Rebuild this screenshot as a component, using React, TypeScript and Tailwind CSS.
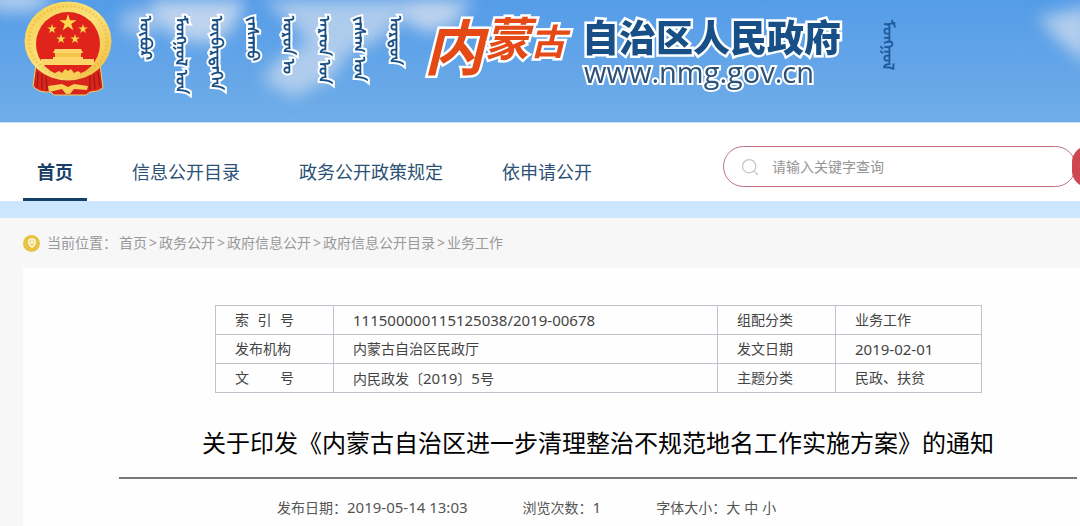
import { MapPin, Search } from 'lucide-react'

const mongolianTitle = [
  'ᠥᠪᠥᠷ',
  'ᠮᠣᠩᠭᠣᠯ ᠤᠨ',
  'ᠥᠪᠡᠷᠲᠡᠭᠡᠨ',
  'ᠵᠠᠰᠠᠬᠤ',
  'ᠣᠷᠣᠨ ᠤ',
  'ᠠᠷᠠᠳ ᠤᠨ',
  'ᠵᠠᠰᠠᠭ ᠤᠨ',
  'ᠣᠷᠳᠣᠨ',
]

const navItems = ['首页', '信息公开目录', '政务公开政策规定', '依申请公开']

const crumbs = ['首页', '政务公开', '政府信息公开', '政府信息公开目录', '业务工作']

const Star = ({ x, y, r }: { x: number; y: number; r: number }) => {
  const points = Array.from({ length: 10 }, (_, i) => {
    const radius = i % 2 === 0 ? r : r * 0.38
    const angle = (Math.PI / 5) * i - Math.PI / 2
    return `${x + radius * Math.cos(angle)},${y + radius * Math.sin(angle)}`
  }).join(' ')
  return <polygon points={points} fill="#fbd84e" />
}

const Emblem = () => (
  <svg viewBox="0 0 90 96" className="w-[90px] h-24 shrink-0" aria-label="国徽" role="img">
    <defs>
      <linearGradient id="gold" x1="0" y1="0" x2="1" y2="1">
        <stop offset="0" stopColor="#f6cf4f" />
        <stop offset="0.5" stopColor="#fbe27c" />
        <stop offset="1" stopColor="#efb93a" />
      </linearGradient>
    </defs>
    <path d="M12 64 L9 86 Q14 93 27 92 L30 95 H62 L66 92 Q74 92 79 88 L76 64 Z" fill="#d9261c" stroke="#f5d05a" strokeWidth="1" />
    <path d="M14 72 L13 88 M18 74 L18 90 M22 76 L23 91 M66 76 L66 90 M70 74 L71 89 M74 72 L76 87" stroke="#9f1712" strokeWidth="1.2" />
    <ellipse cx="44" cy="41" rx="43.5" ry="39.5" fill="url(#gold)" />
    <ellipse cx="44" cy="41" rx="39" ry="35" fill="none" stroke="#e3a52c" strokeWidth="3" strokeDasharray="2 2" opacity="0.35" />
    <circle cx="44" cy="44" r="32" fill="#e0241b" />
    <Star x={44} y={23} r={9} />
    <Star x={28} y={29} r={5} />
    <Star x={59} y={29} r={5} />
    <Star x={37} y={39} r={5} />
    <Star x={51} y={39} r={5} />
    <path d="M31 49 H57 L59 53 H29 Z" fill="#fbd568" />
    <rect x="31" y="53" width="26" height="4" fill="#f4c64c" />
    <path d="M29 57 H59 V59 H70 V65 H17 V59 H29 Z" fill="#fbd568" />
    <path d="M31 73 L35 71 L38 73 L41 69 L44 71 L47 69 L50 73 L54 71 L57 73 L53 77 H35 Z" fill="#f7cf56" />
    <path d="M24 86 L38 84 L44 87 L50 84 L64 86 L63 90 L50 89 L46 94 H42 L38 89 L25 92 Z" fill="#f7cf56" />
  </svg>
)

const Sky = () => (
  <svg viewBox="0 0 1080 123" preserveAspectRatio="none" className="absolute inset-0 w-full h-full" aria-hidden="true">
    <defs>
      <linearGradient id="sky" x1="0" y1="0" x2="0" y2="1">
        <stop offset="0" stopColor="#559ce8" />
        <stop offset="1" stopColor="#70ade8" />
      </linearGradient>
      <filter id="cloud" x="-50%" y="-50%" width="200%" height="200%">
        <feGaussianBlur stdDeviation="8" />
      </filter>
    </defs>
    <rect width="1080" height="123" fill="url(#sky)" />
    <g filter="url(#cloud)" fill="#c9d9ee">
      <ellipse cx="16" cy="0" rx="34" ry="12" opacity="0.8" />
      <ellipse cx="140" cy="22" rx="20" ry="14" opacity="0.6" />
      <path d="M150 0 H246 L232 30 L212 44 L180 40 L160 24 Z" opacity="0.9" />
      <path d="M262 0 H475 L452 24 L428 34 L402 18 L380 40 L350 52 L330 80 L292 98 L262 80 L280 58 L308 44 L290 22 Z" opacity="0.75" />
      <ellipse cx="432" cy="14" rx="30" ry="16" opacity="0.6" />
      <path d="M1038 18 L1090 6 V66 L1060 42 Z" opacity="0.8" />
    </g>
  </svg>
)

const Banner = () => (
  <header className="relative h-[123px] overflow-hidden border-b border-[#c9e2f7]">
    <Sky />
    <div className="relative flex items-start pl-6">
      <Emblem />
      <div lang="mn" className="flex w-[274px] shrink-0 justify-between ml-5 pt-4 text-base leading-6 font-bold text-[#174f86]">
        {mongolianTitle.map((word) => (
          <span key={word} className="whitespace-nowrap [writing-mode:vertical-lr] [paint-order:stroke_fill] [-webkit-text-stroke:4px_white]">
            {word}
          </span>
        ))}
      </div>
      <div className="flex w-[142px] shrink-0 items-start ml-4 pt-2 font-bold italic text-[#e54a16] [paint-order:stroke_fill] [-webkit-text-stroke:5px_white]">
        <span className="text-[60px] leading-[78px]">内</span>
        <span className="text-[46px] leading-[60px]">蒙</span>
        <span className="text-4xl leading-[68px]">古</span>
      </div>
      <div className="shrink-0 ml-4 pt-4 text-[#174f86]">
        <h1 className="text-[37px] leading-11 font-black [paint-order:stroke_fill] [-webkit-text-stroke:5px_white]">自治区人民政府</h1>
        <p className="pl-0.5 text-[29px] leading-6 text-[#2d5177] font-['Open_Sans',sans-serif] [paint-order:stroke_fill] [-webkit-text-stroke:4px_white]">
          www.nmg.gov.cn
        </p>
      </div>
      <a href="#mn" lang="mn" className="ml-9 mt-5 text-base font-bold text-[#1f5b9a] [writing-mode:vertical-lr]">
        ᠮᠣᠩᠭᠣᠯ
      </a>
    </div>
  </header>
)

const Navbar = () => (
  <div className="flex h-[78px] items-end overflow-hidden bg-white pl-[23px]">
    <nav className="flex gap-[31px]">
      {navItems.map((item, i) => (
        <a
          key={item}
          href="#"
          className={
            i === 0
              ? 'border-b-3 border-[#173f68] px-3.5 pb-3 text-lg font-bold text-[#173f68]'
              : 'border-b-3 border-transparent px-3.5 pb-3 text-lg text-[#2b5176]'
          }
        >
          {item}
        </a>
      ))}
    </nav>
    <form className="flex w-[357px] shrink-0 ml-auto mb-3.5">
      <label className="flex h-[41px] w-[353px] shrink-0 items-center gap-3 rounded-full border border-[#c0727f] pl-4">
        <Search className="h-5 w-5 text-[#c4c4c4]" strokeWidth={1.5} />
        <input
          type="text"
          aria-label="请输入关键字查询"
          placeholder="请输入关键字查询"
          className="min-w-0 flex-1 text-sm outline-none placeholder:text-[#969696]"
        />
      </label>
      <button type="submit" aria-label="查询" className="relative h-[41px] w-24 shrink-0 -ml-1 rounded-2xl bg-[#cf4650]" />
    </form>
  </div>
)

const Breadcrumb = () => (
  <div className="flex h-[50px] items-center pl-[23px] text-sm text-[#999]">
    <span className="mr-[7px] flex h-[17px] w-[17px] items-center justify-center rounded-full bg-[#e8c341]">
      <MapPin className="h-2.5 w-2.5 text-white" strokeWidth={3} />
    </span>
    <span className="mr-0.5">当前位置：</span>
    {crumbs.map((crumb, i) => (
      <span key={crumb}>
        {i > 0 && <span className="mx-0.5">&gt;</span>}
        <a href="#">{crumb}</a>
      </span>
    ))}
  </div>
)

const cell = 'h-[29px] border border-[#c6c0cc] py-0 pl-[19px] font-normal text-left'

const InfoTable = () => (
  <table className="w-[767px] table-fixed border-collapse text-sm leading-6 text-[#444]">
    <colgroup>
      <col className="w-[118px]" />
      <col />
      <col className="w-[118px]" />
      <col className="w-[146px]" />
    </colgroup>
    <tbody>
      <tr>
        <th className={cell}><span className="flex w-[59px] justify-between"><span>索</span><span>引</span><span>号</span></span></th>
        <td className={cell}><span className="text-[15px]">111500000115125038/2019-00678</span></td>
        <th className={cell}>组配分类</th>
        <td className={cell}>业务工作</td>
      </tr>
      <tr>
        <th className={cell}>发布机构</th>
        <td className={cell}>内蒙古自治区民政厅</td>
        <th className={cell}>发文日期</th>
        <td className={cell}><span className="text-[15px]">2019-02-01</span></td>
      </tr>
      <tr>
        <th className={cell}><span className="flex w-[59px] justify-between"><span>文</span><span>号</span></span></th>
        <td className={cell}>内民政发〔<span className="text-[15px]">2019</span>〕<span className="text-[15px]">5</span>号</td>
        <th className={cell}>主题分类</th>
        <td className={cell}>民政、扶贫</td>
      </tr>
    </tbody>
  </table>
)

const App = () => {
  return (
    <div className="min-h-screen overflow-hidden bg-[#f8f7f8] font-['Noto_Sans','Noto_Sans_CJK_SC',sans-serif]">
      <Banner />
      <Navbar />
      <div className="h-[17px] bg-[#cce6fe]" />
      <Breadcrumb />
      <main className="ml-[23px] bg-[#fefefe] pt-[37px] pb-2">
        <div className="ml-48">
          <InfoTable />
        </div>
        <article className="ml-24 mr-[3px]">
          <h2 className="border-b-2 border-[#777] pt-8 pb-4 text-center text-2xl leading-9 text-black">
            关于印发《内蒙古自治区进一步清理整治不规范地名工作实施方案》的通知
          </h2>
          <div className="flex items-baseline gap-[55px] pl-[158px] pt-4 text-sm leading-6 text-[#555]">
            <span>发布日期：<span className="text-[15px]">2019-05-14 13:03</span></span>
            <span>浏览次数：<span className="text-[15px]">1</span></span>
            <span className="flex items-baseline gap-1">
              <span>字体大小：<button type="button">大</button></span>
              <button type="button">中</button>
              <button type="button">小</button>
            </span>
          </div>
        </article>
      </main>
    </div>
  )
}

export default App
